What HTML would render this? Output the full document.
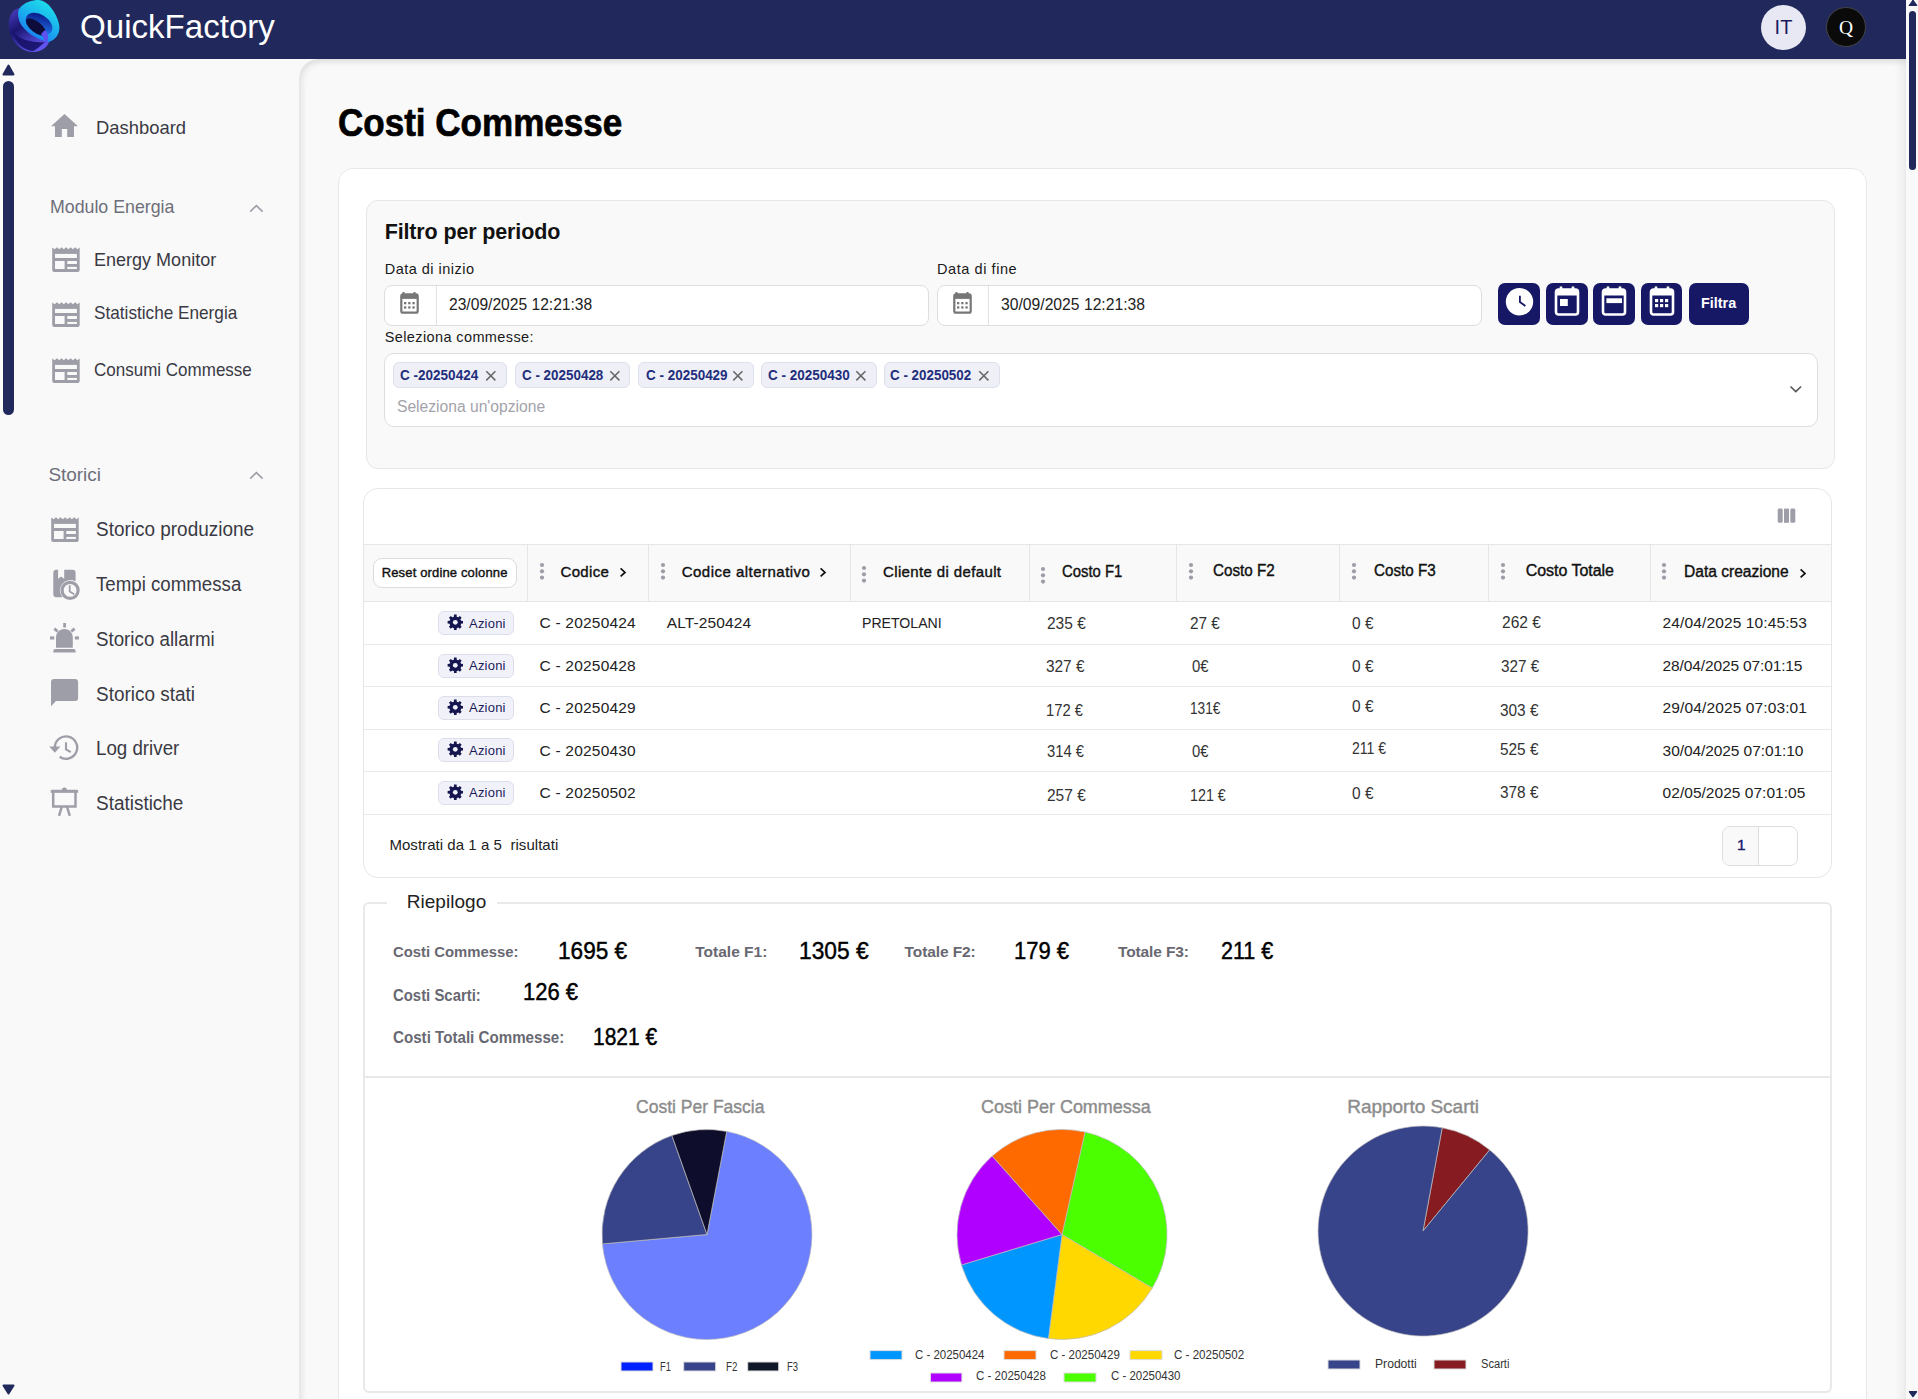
<!DOCTYPE html><html><head><meta charset="utf-8"><style>
*{box-sizing:border-box;margin:0;padding:0}
html,body{width:1918px;height:1399px;overflow:hidden;background:#f9f9f9}
body{position:relative;font-family:"Liberation Sans",sans-serif}
.t{position:absolute;white-space:nowrap}
.b{position:absolute}
</style></head><body>
<div class="b" style="left:0;top:0;width:1906px;height:59px;background:#21295c"></div>
<div class="b" style="left:299px;top:59px;width:1607px;height:1400px;background:#f9f9f9;border-top-left-radius:20px;box-shadow:inset 3px 3px 6px rgba(0,0,0,0.09), inset -5px 0 9px rgba(0,0,0,0.06)"></div>
<div class="b" style="left:1906px;top:0;width:12px;height:1399px;background:#f9f9f9"></div>
<svg class="b" style="left:1906px;top:0" width="12" height="1399"><path d="M3,5.5 L7,0 L11,5.5 Z" fill="#21295c" stroke="#21295c" stroke-width="1" stroke-linejoin="round"/><rect x="3" y="11" width="7" height="159" rx="3.5" fill="#21295c"/><path d="M3.5,1391.8 L10.5,1391.8 L7,1396.6 Z" fill="#21295c" stroke="#21295c" stroke-width="1.4" stroke-linejoin="round"/></svg>
<svg class="b" style="left:0;top:59px" width="20" height="1340"><path d="M3.5,15.5 L8.5,6.5 L13.5,15.5 Z" fill="#21295c" stroke="#21295c" stroke-width="2" stroke-linejoin="round"/><rect x="3" y="22" width="11" height="334" rx="5.5" fill="#21295c"/><path d="M3.5,1326.5 L13.5,1326.5 L8.5,1334.5 Z" fill="#21295c" stroke="#21295c" stroke-width="2" stroke-linejoin="round"/></svg>
<div class="b" style="left:338px;top:168px;width:1529px;height:1300px;background:#fff;border:1px solid #e8e8e8;border-radius:15px"></div>
<div class="b" style="left:366px;top:200px;width:1469px;height:269px;background:#f9f9f9;border:1px solid #e6e6e6;border-radius:12px"></div>
<div class="b" style="left:363px;top:488px;width:1469px;height:390px;background:#fff;border:1px solid #e6e6e6;border-radius:15px;overflow:hidden"><div class="b" style="left:0;top:55px;width:1469px;height:58px;background:#f9f9f9;border-top:1px solid #e6e6e6;border-bottom:1px solid #e6e6e6"></div><div class="b" style="left:0;top:155px;width:1469px;height:1px;background:#e9e9e9"></div><div class="b" style="left:0;top:197px;width:1469px;height:1px;background:#e9e9e9"></div><div class="b" style="left:0;top:240px;width:1469px;height:1px;background:#e9e9e9"></div><div class="b" style="left:0;top:282px;width:1469px;height:1px;background:#e9e9e9"></div><div class="b" style="left:0;top:325px;width:1469px;height:1px;background:#e9e9e9"></div><div class="b" style="left:163px;top:56px;width:1px;height:56px;background:#e6e6e6"></div><div class="b" style="left:284px;top:56px;width:1px;height:56px;background:#e6e6e6"></div><div class="b" style="left:486px;top:56px;width:1px;height:56px;background:#e6e6e6"></div><div class="b" style="left:665px;top:56px;width:1px;height:56px;background:#e6e6e6"></div><div class="b" style="left:812px;top:56px;width:1px;height:56px;background:#e6e6e6"></div><div class="b" style="left:975px;top:56px;width:1px;height:56px;background:#e6e6e6"></div><div class="b" style="left:1124px;top:56px;width:1px;height:56px;background:#e6e6e6"></div><div class="b" style="left:1286px;top:56px;width:1px;height:56px;background:#e6e6e6"></div></div>
<div class="b" style="left:363px;top:902px;width:1469px;height:491px;border:2px solid #e9e9e9;border-radius:6px"></div>
<div class="b" style="left:387px;top:895px;width:110px;height:12px;background:#fff"></div>
<div class="b" style="left:365px;top:1076px;width:1466px;height:2px;background:#e9e9e9"></div>
<svg class="b" style="left:0;top:0" width="70" height="59" viewBox="0 0 70 59">
<defs>
<linearGradient id="lgP" x1="0" y1="0" x2="0.6" y2="1"><stop offset="0" stop-color="#5040c8"/><stop offset="0.45" stop-color="#1a1670"/><stop offset="1" stop-color="#6254ee"/></linearGradient>
<linearGradient id="lgC" x1="0.8" y1="0" x2="0.2" y2="1"><stop offset="0" stop-color="#1ee6ea"/><stop offset="0.55" stop-color="#1aa8ee"/><stop offset="1" stop-color="#1a6ef2"/></linearGradient>
<linearGradient id="lgB" x1="0.2" y1="0" x2="0.8" y2="1"><stop offset="0" stop-color="#0a1480"/><stop offset="1" stop-color="#2080f8"/></linearGradient>
</defs>
<path d="M19,8 C12,10 8,16 9,28 C10,40 20,52 33,52 C42,52 48,46 49,42 L40,30 Z" fill="url(#lgP)"/>
<path d="M19,9 C24,2 32,0 39,0 C48,1 56,12 59,24 C61,34 55,40 49,42 C40,40 30,36 22,26 C18,20 17,13 19,9 Z" fill="url(#lgC)"/>
<ellipse cx="39" cy="24" rx="14.5" ry="9.5" transform="rotate(32 39 24)" fill="url(#lgB)"/>
<path d="M13,32 C20,40 32,43 45,42 C40,46 36,50 33,51 C24,50 16,44 13,32 Z" fill="#171268" opacity="0.9"/>
<ellipse cx="36" cy="27" rx="12" ry="5.3" transform="rotate(38 36 27)" fill="#0e0c3a"/>
<path d="M45,30 C49,34 49,40 46,44 C44,40 43,36 41,34 Z" fill="#5e50f0"/>
</svg>
<div class="b" style="left:1761px;top:5px;width:45px;height:45px;border-radius:50%;background:#e8e8f4"></div>
<div class="t" style="left:1761px;top:15px;width:45px;text-align:center;font:400 20px/24px 'Liberation Sans',sans-serif;color:#1a1a5e">IT</div>
<div class="b" style="left:1826px;top:7px;width:40px;height:40px;border-radius:50%;background:#0a0a0a;border:1px solid #444"></div>
<div class="t" style="left:1826px;top:17px;width:40px;text-align:center;font:400 19.5px/22px 'Liberation Serif',serif;color:#fff">Q</div>
<svg class="b" style="left:48px;top:110px;" width="30" height="28" viewBox="0 0 30 28"><path d="M10.8,27 V18.9 H16.2 V27 H23 V16.2 H27 L13.5,4 L0,16.2 H4 V27 Z" transform="translate(3,0) scale(1)" fill="#9e9ea8"/></svg>
<svg class="b" style="left:51.5px;top:247.2px;" width="28" height="25" viewBox="0 0 28 25"><path d="M0.2,23 L0.2,0.6 L2.7,2.2 L5.0,0.2 L7.2,2.2 L9.5,0.2 L11.8,2.2 L14.1,0.2 L16.4,2.2 L18.7,0.2 L20.9,2.2 L23.2,0.2 L25.4,2.2 L27.7,0.6 L27.7,25.0 L27.7,23 Q27.7,25 25.7,25 L2.2,25 Q0.2,25 0.2,23 Z" fill="#9e9ea8"/><rect x="3" y="6.9" width="21.9" height="4.1" fill="#f9f9f9"/><rect x="3" y="14" width="9.6" height="8" fill="#f9f9f9"/><rect x="15.3" y="14" width="9.6" height="3" fill="#f9f9f9"/><rect x="15.3" y="19.9" width="9.6" height="2.1" fill="#f9f9f9"/></svg>
<svg class="b" style="left:51.5px;top:302.3px;" width="28" height="25" viewBox="0 0 28 25"><path d="M0.2,23 L0.2,0.6 L2.7,2.2 L5.0,0.2 L7.2,2.2 L9.5,0.2 L11.8,2.2 L14.1,0.2 L16.4,2.2 L18.7,0.2 L20.9,2.2 L23.2,0.2 L25.4,2.2 L27.7,0.6 L27.7,25.0 L27.7,23 Q27.7,25 25.7,25 L2.2,25 Q0.2,25 0.2,23 Z" fill="#9e9ea8"/><rect x="3" y="6.9" width="21.9" height="4.1" fill="#f9f9f9"/><rect x="3" y="14" width="9.6" height="8" fill="#f9f9f9"/><rect x="15.3" y="14" width="9.6" height="3" fill="#f9f9f9"/><rect x="15.3" y="19.9" width="9.6" height="2.1" fill="#f9f9f9"/></svg>
<svg class="b" style="left:51.5px;top:358.1px;" width="28" height="25" viewBox="0 0 28 25"><path d="M0.2,23 L0.2,0.6 L2.7,2.2 L5.0,0.2 L7.2,2.2 L9.5,0.2 L11.8,2.2 L14.1,0.2 L16.4,2.2 L18.7,0.2 L20.9,2.2 L23.2,0.2 L25.4,2.2 L27.7,0.6 L27.7,25.0 L27.7,23 Q27.7,25 25.7,25 L2.2,25 Q0.2,25 0.2,23 Z" fill="#9e9ea8"/><rect x="3" y="6.9" width="21.9" height="4.1" fill="#f9f9f9"/><rect x="3" y="14" width="9.6" height="8" fill="#f9f9f9"/><rect x="15.3" y="14" width="9.6" height="3" fill="#f9f9f9"/><rect x="15.3" y="19.9" width="9.6" height="2.1" fill="#f9f9f9"/></svg>
<svg class="b" style="left:50.8px;top:516.5px;" width="28" height="25" viewBox="0 0 28 25"><path d="M0.2,23 L0.2,0.6 L2.7,2.2 L5.0,0.2 L7.2,2.2 L9.5,0.2 L11.8,2.2 L14.1,0.2 L16.4,2.2 L18.7,0.2 L20.9,2.2 L23.2,0.2 L25.4,2.2 L27.7,0.6 L27.7,25.0 L27.7,23 Q27.7,25 25.7,25 L2.2,25 Q0.2,25 0.2,23 Z" fill="#9e9ea8"/><rect x="3" y="6.9" width="21.9" height="4.1" fill="#f9f9f9"/><rect x="3" y="14" width="9.6" height="8" fill="#f9f9f9"/><rect x="15.3" y="14" width="9.6" height="3" fill="#f9f9f9"/><rect x="15.3" y="19.9" width="9.6" height="2.1" fill="#f9f9f9"/></svg>
<svg class="b" style="left:50px;top:566px;" width="32" height="36" viewBox="0 0 32 36"><path d="M6.3,3.8 H8.1 V12.8 L11.15,10.6 L14.2,12.8 V3.8 H22.6 Q25.6,3.8 25.6,6.8 V15.5 A10.4,10.4 0 0 0 12.5,31.3 H6.3 Q3.3,31.3 3.3,28.3 V6.8 Q3.3,3.8 6.3,3.8 Z" fill="#9e9ea8"/><circle cx="20.1" cy="24.4" r="8" fill="none" stroke="#9e9ea8" stroke-width="3.2"/><path d="M19.7,19.3 V25.5 L24.2,28.2" fill="none" stroke="#9e9ea8" stroke-width="1.8"/></svg>
<svg class="b" style="left:48px;top:620px;" width="34" height="36" viewBox="0 0 34 36"><path d="M8,27.7 V17.3 A8.4,8.4 0 0 1 24.8,17.3 V27.7 Z" fill="#9e9ea8"/><path d="M5.3,32.5 V31 Q5.3,29.1 7.3,29.1 H25.6 Q27.6,29.1 27.6,31 V32.5 Z" fill="#9e9ea8"/><rect x="15.2" y="3" width="2.8" height="4.5" fill="#9e9ea8"/><path d="M6.3,8.6 L9.6,11.5" stroke="#9e9ea8" stroke-width="2.8"/><path d="M26.6,8.6 L23.3,11.5" stroke="#9e9ea8" stroke-width="2.8"/><rect x="2" y="16.4" width="4.3" height="3.1" fill="#9e9ea8"/><rect x="26.9" y="16.4" width="4.1" height="3.1" fill="#9e9ea8"/></svg>
<svg class="b" style="left:50px;top:677px;" width="30" height="32" viewBox="0 0 30 32"><path d="M4,2 H25.1 Q28.1,2 28.1,5 V21 Q28.1,24 25.1,24 H6 L1,29.2 V5 Q1,2 4,2 Z" fill="#9e9ea8"/></svg>
<svg class="b" style="left:48px;top:732px;" width="34" height="32" viewBox="0 0 34 32"><path d="M6.8,15.6 A11.2,11.2 0 1 1 11.6,24.8" fill="none" stroke="#9e9ea8" stroke-width="2.3"/><path d="M1.2,14.6 L12.4,14.6 L6.8,20.8 Z" fill="#9e9ea8"/><path d="M18,10.3 V17.3 L22.8,20.2" fill="none" stroke="#9e9ea8" stroke-width="2.1"/></svg>
<svg class="b" style="left:48px;top:784px;" width="34" height="34" viewBox="0 0 34 34"><rect x="2.7" y="6" width="27.4" height="2.8" fill="#9e9ea8"/><path d="M13.9,6 A2.5,2.5 0 0 1 18.9,6 Z" fill="#9e9ea8"/><rect x="5.2" y="7" width="22.3" height="15.5" fill="none" stroke="#9e9ea8" stroke-width="2.5"/><path d="M13.7,23 L11,31.8 M19.1,23 L21.8,31.8" stroke="#9e9ea8" stroke-width="2.5"/></svg>
<svg class="b" style="left:248px;top:204px;" width="17" height="10" viewBox="0 0 17 10"><path d="M2.2,7.6 L8.4,1.6 L14.6,7.6" fill="none" stroke="#9e9ea8" stroke-width="1.6"/></svg>
<svg class="b" style="left:248px;top:471px;" width="17" height="10" viewBox="0 0 17 10"><path d="M2.2,7.6 L8.4,1.6 L14.6,7.6" fill="none" stroke="#9e9ea8" stroke-width="1.6"/></svg>
<div class="b" style="left:383.5px;top:285px;width:545.0px;height:41px;background:#fff;border:1px solid #dedede;border-radius:8px"></div>
<div class="b" style="left:435.5px;top:286px;width:1px;height:39px;background:#e2e2e2"></div>
<svg class="b" style="left:399.0px;top:291px;" width="21" height="24" viewBox="0 0 21 24"><path d="M4.5,1 V4 M15.5,1 V4" stroke="#777" stroke-width="2"/><rect x="2.3" y="3.3" width="16.4" height="18.4" rx="1.8" fill="none" stroke="#777" stroke-width="2.2"/><rect x="2.3" y="3.3" width="16.4" height="4.6" fill="#777"/><rect x="5.0" y="11.0" width="2.3" height="2.3" fill="#777"/><rect x="5.0" y="15.3" width="2.3" height="2.3" fill="#777"/><rect x="9.2" y="11.0" width="2.3" height="2.3" fill="#777"/><rect x="9.2" y="15.3" width="2.3" height="2.3" fill="#777"/><rect x="13.4" y="11.0" width="2.3" height="2.3" fill="#777"/><rect x="13.4" y="15.3" width="2.3" height="2.3" fill="#777"/></svg>
<div class="b" style="left:936.5px;top:285px;width:545.0px;height:41px;background:#fff;border:1px solid #dedede;border-radius:8px"></div>
<div class="b" style="left:987.5px;top:286px;width:1px;height:39px;background:#e2e2e2"></div>
<svg class="b" style="left:951.5px;top:291px;" width="21" height="24" viewBox="0 0 21 24"><path d="M4.5,1 V4 M15.5,1 V4" stroke="#777" stroke-width="2"/><rect x="2.3" y="3.3" width="16.4" height="18.4" rx="1.8" fill="none" stroke="#777" stroke-width="2.2"/><rect x="2.3" y="3.3" width="16.4" height="4.6" fill="#777"/><rect x="5.0" y="11.0" width="2.3" height="2.3" fill="#777"/><rect x="5.0" y="15.3" width="2.3" height="2.3" fill="#777"/><rect x="9.2" y="11.0" width="2.3" height="2.3" fill="#777"/><rect x="9.2" y="15.3" width="2.3" height="2.3" fill="#777"/><rect x="13.4" y="11.0" width="2.3" height="2.3" fill="#777"/><rect x="13.4" y="15.3" width="2.3" height="2.3" fill="#777"/></svg>
<div class="b" style="left:1498.3px;top:283px;width:41.6px;height:42px;background:#161866;border-radius:7px"></div>
<div class="b" style="left:1546px;top:283px;width:42.0px;height:42px;background:#161866;border-radius:7px"></div>
<div class="b" style="left:1593px;top:283px;width:41.6px;height:42px;background:#161866;border-radius:7px"></div>
<div class="b" style="left:1640.8px;top:283px;width:41.5px;height:42px;background:#161866;border-radius:7px"></div>
<div class="b" style="left:1688.6px;top:283px;width:60.6px;height:42px;background:#161866;border-radius:7px"></div>
<svg class="b" style="left:1505px;top:287px;" width="30" height="30" viewBox="0 0 30 30"><circle cx="14.5" cy="14.7" r="13.7" fill="#fff"/><path d="M14.9,8.8 V15 L20.4,19" fill="none" stroke="#161866" stroke-width="1.8"/></svg>
<svg class="b" style="left:1553.3px;top:285px;" width="28" height="32" viewBox="0 0 28 32"><path d="M8,1.5 V6 M20,1.5 V6" stroke="#fff" stroke-width="2.6"/><rect x="3" y="4.5" width="22" height="25" rx="2.5" fill="none" stroke="#fff" stroke-width="2.6"/><rect x="3" y="4.5" width="22" height="6" fill="#fff"/><rect x="7" y="14" width="7.8" height="7" fill="#fff"/></svg>
<svg class="b" style="left:1600.3px;top:285px;" width="28" height="32" viewBox="0 0 28 32"><path d="M8,1.5 V6 M20,1.5 V6" stroke="#fff" stroke-width="2.6"/><rect x="3" y="4.5" width="22" height="25" rx="2.5" fill="none" stroke="#fff" stroke-width="2.6"/><rect x="3" y="4.5" width="22" height="6" fill="#fff"/><rect x="6.4" y="13.3" width="15.6" height="4.8" fill="#fff"/></svg>
<svg class="b" style="left:1647.8px;top:285px;" width="28" height="32" viewBox="0 0 28 32"><path d="M8,1.5 V6 M20,1.5 V6" stroke="#fff" stroke-width="2.6"/><rect x="3" y="4.5" width="22" height="25" rx="2.5" fill="none" stroke="#fff" stroke-width="2.6"/><rect x="3" y="4.5" width="22" height="6" fill="#fff"/><rect x="7.0" y="14.0" width="3.2" height="3.2" fill="#fff"/><rect x="7.0" y="19.0" width="3.2" height="3.2" fill="#fff"/><rect x="12.0" y="14.0" width="3.2" height="3.2" fill="#fff"/><rect x="12.0" y="19.0" width="3.2" height="3.2" fill="#fff"/><rect x="17.0" y="14.0" width="3.2" height="3.2" fill="#fff"/><rect x="17.0" y="19.0" width="3.2" height="3.2" fill="#fff"/></svg>
<div class="t" style="left:1701.0px;top:294.9px;font:700 15.5px/15.5px 'Liberation Sans', sans-serif;color:#fff;letter-spacing:0.00px;transform:scaleX(0.9288);transform-origin:0 0;">Filtra</div>
<div class="b" style="left:383.5px;top:353px;width:1434px;height:74px;background:#fff;border:1px solid #dedede;border-radius:10px"></div>
<svg class="b" style="left:1788px;top:383px;" width="16" height="12" viewBox="0 0 16 12"><path d="M2.5,3.5 L7.8,8.6 L13.1,3.5" fill="none" stroke="#555" stroke-width="1.5"/></svg>
<div class="b" style="left:393px;top:362.3px;width:114.4px;height:25.5px;background:#eff0f7;border:1px solid #dcdfec;border-radius:6px"></div>
<div class="t" style="left:400.0px;top:368.1px;font:700 14.0px/14.0px 'Liberation Sans', sans-serif;color:#1f2e7c;letter-spacing:0.00px;transform:scaleX(0.9661);transform-origin:0 0;">C -20250424</div>
<svg class="b" style="left:485px;top:370px;" width="12" height="12" viewBox="0 0 12 12"><path d="M1.3,1.3 L10.4,10.4 M10.4,1.3 L1.3,10.4" stroke="#666" stroke-width="1.5"/></svg>
<div class="b" style="left:514.8px;top:362.3px;width:115.5px;height:25.5px;background:#eff0f7;border:1px solid #dcdfec;border-radius:6px"></div>
<div class="t" style="left:522.3px;top:368.1px;font:700 14.0px/14.0px 'Liberation Sans', sans-serif;color:#1f2e7c;letter-spacing:0.00px;transform:scaleX(0.9583);transform-origin:0 0;">C - 20250428</div>
<svg class="b" style="left:608.7px;top:370px;" width="12" height="12" viewBox="0 0 12 12"><path d="M1.3,1.3 L10.4,10.4 M10.4,1.3 L1.3,10.4" stroke="#666" stroke-width="1.5"/></svg>
<div class="b" style="left:638.3px;top:362.3px;width:115.9px;height:25.5px;background:#eff0f7;border:1px solid #dcdfec;border-radius:6px"></div>
<div class="t" style="left:645.5px;top:368.1px;font:700 14.0px/14.0px 'Liberation Sans', sans-serif;color:#1f2e7c;letter-spacing:0.00px;transform:scaleX(0.9618);transform-origin:0 0;">C - 20250429</div>
<svg class="b" style="left:732px;top:370px;" width="12" height="12" viewBox="0 0 12 12"><path d="M1.3,1.3 L10.4,10.4 M10.4,1.3 L1.3,10.4" stroke="#666" stroke-width="1.5"/></svg>
<div class="b" style="left:761.2px;top:362.3px;width:115.5px;height:25.5px;background:#eff0f7;border:1px solid #dcdfec;border-radius:6px"></div>
<div class="t" style="left:768.3px;top:368.1px;font:700 14.0px/14.0px 'Liberation Sans', sans-serif;color:#1f2e7c;letter-spacing:0.00px;transform:scaleX(0.9630);transform-origin:0 0;">C - 20250430</div>
<svg class="b" style="left:854.9px;top:370px;" width="12" height="12" viewBox="0 0 12 12"><path d="M1.3,1.3 L10.4,10.4 M10.4,1.3 L1.3,10.4" stroke="#666" stroke-width="1.5"/></svg>
<div class="b" style="left:884.2px;top:362.3px;width:115.9px;height:25.5px;background:#eff0f7;border:1px solid #dcdfec;border-radius:6px"></div>
<div class="t" style="left:889.6px;top:368.1px;font:700 14.0px/14.0px 'Liberation Sans', sans-serif;color:#1f2e7c;letter-spacing:0.00px;transform:scaleX(0.9571);transform-origin:0 0;">C - 20250502</div>
<svg class="b" style="left:978.1px;top:370px;" width="12" height="12" viewBox="0 0 12 12"><path d="M1.3,1.3 L10.4,10.4 M10.4,1.3 L1.3,10.4" stroke="#666" stroke-width="1.5"/></svg>
<div class="b" style="left:372.5px;top:557.5px;width:144.5px;height:30px;background:#fff;border:1px solid #dcdcdc;border-radius:9px"></div>
<svg class="b" style="left:538.5px;top:561.8px;" width="6" height="18" viewBox="0 0 6 18"><circle cx="3" cy="3.0" r="2.1" fill="#9d9da8"/><circle cx="3" cy="9.3" r="2.1" fill="#9d9da8"/><circle cx="3" cy="15.6" r="2.1" fill="#9d9da8"/></svg>
<svg class="b" style="left:660px;top:562px;" width="6" height="18" viewBox="0 0 6 18"><circle cx="3" cy="3.0" r="2.1" fill="#9d9da8"/><circle cx="3" cy="9.3" r="2.1" fill="#9d9da8"/><circle cx="3" cy="15.6" r="2.1" fill="#9d9da8"/></svg>
<svg class="b" style="left:860.8px;top:565px;" width="6" height="18" viewBox="0 0 6 18"><circle cx="3" cy="3.0" r="2.1" fill="#9d9da8"/><circle cx="3" cy="9.3" r="2.1" fill="#9d9da8"/><circle cx="3" cy="15.6" r="2.1" fill="#9d9da8"/></svg>
<svg class="b" style="left:1039.5px;top:565.8px;" width="6" height="18" viewBox="0 0 6 18"><circle cx="3" cy="3.0" r="2.1" fill="#9d9da8"/><circle cx="3" cy="9.3" r="2.1" fill="#9d9da8"/><circle cx="3" cy="15.6" r="2.1" fill="#9d9da8"/></svg>
<svg class="b" style="left:1187.8px;top:561.5px;" width="6" height="18" viewBox="0 0 6 18"><circle cx="3" cy="3.0" r="2.1" fill="#9d9da8"/><circle cx="3" cy="9.3" r="2.1" fill="#9d9da8"/><circle cx="3" cy="15.6" r="2.1" fill="#9d9da8"/></svg>
<svg class="b" style="left:1350.5px;top:561.5px;" width="6" height="18" viewBox="0 0 6 18"><circle cx="3" cy="3.0" r="2.1" fill="#9d9da8"/><circle cx="3" cy="9.3" r="2.1" fill="#9d9da8"/><circle cx="3" cy="15.6" r="2.1" fill="#9d9da8"/></svg>
<svg class="b" style="left:1499.7px;top:561.6px;" width="6" height="18" viewBox="0 0 6 18"><circle cx="3" cy="3.0" r="2.1" fill="#9d9da8"/><circle cx="3" cy="9.3" r="2.1" fill="#9d9da8"/><circle cx="3" cy="15.6" r="2.1" fill="#9d9da8"/></svg>
<svg class="b" style="left:1661.3px;top:561.6px;" width="6" height="18" viewBox="0 0 6 18"><circle cx="3" cy="3.0" r="2.1" fill="#9d9da8"/><circle cx="3" cy="9.3" r="2.1" fill="#9d9da8"/><circle cx="3" cy="15.6" r="2.1" fill="#9d9da8"/></svg>
<svg class="b" style="left:619.3px;top:566.9px;" width="9" height="11" viewBox="0 0 9 11"><path d="M1.6,1.4 L6,5.4 L1.6,9.4" fill="none" stroke="#111" stroke-width="1.7"/></svg>
<svg class="b" style="left:819px;top:566.9px;" width="9" height="11" viewBox="0 0 9 11"><path d="M1.6,1.4 L6,5.4 L1.6,9.4" fill="none" stroke="#111" stroke-width="1.7"/></svg>
<svg class="b" style="left:1799px;top:567.5px;" width="9" height="11" viewBox="0 0 9 11"><path d="M1.6,1.4 L6,5.4 L1.6,9.4" fill="none" stroke="#111" stroke-width="1.7"/></svg>
<svg class="b" style="left:1777px;top:508px;" width="20" height="16" viewBox="0 0 20 16"><rect x="0.7" y="0.6" width="5" height="14.2" rx="1.6" fill="#9e9ea8"/><rect x="7" y="0.6" width="5" height="14.2" fill="#9e9ea8"/><rect x="13.3" y="0.6" width="5" height="14.2" rx="1.6" fill="#9e9ea8"/></svg>
<div class="b" style="left:437.5px;top:611px;width:76.2px;height:24.4px;background:#f1f2f9;border:1px solid #dcdeea;border-radius:6px"></div>
<svg class="b" style="left:446.5px;top:614px;" width="17" height="17" viewBox="0 0 17 17"><path d="M13.71,6.86 L15.99,6.98 L15.99,9.62 L13.71,9.74 L13.14,11.11 L14.67,12.80 L12.80,14.67 L11.11,13.14 L9.74,13.71 L9.62,15.99 L6.98,15.99 L6.86,13.71 L5.49,13.14 L3.80,14.67 L1.93,12.80 L3.46,11.11 L2.89,9.74 L0.61,9.62 L0.61,6.98 L2.89,6.86 L3.46,5.49 L1.93,3.80 L3.80,1.93 L5.49,3.46 L6.86,2.89 L6.98,0.61 L9.62,0.61 L9.74,2.89 L11.11,3.46 L12.80,1.93 L14.67,3.80 L13.14,5.49 Z" fill="#15154f"/><circle cx="8.3" cy="8.3" r="5.9" fill="#15154f"/><circle cx="8.3" cy="8.3" r="2.4" fill="#f1f2f9"/></svg>
<div class="b" style="left:437.5px;top:653.5px;width:76.2px;height:24.0px;background:#f1f2f9;border:1px solid #dcdeea;border-radius:6px"></div>
<svg class="b" style="left:446.5px;top:656.5px;" width="17" height="17" viewBox="0 0 17 17"><path d="M13.71,6.86 L15.99,6.98 L15.99,9.62 L13.71,9.74 L13.14,11.11 L14.67,12.80 L12.80,14.67 L11.11,13.14 L9.74,13.71 L9.62,15.99 L6.98,15.99 L6.86,13.71 L5.49,13.14 L3.80,14.67 L1.93,12.80 L3.46,11.11 L2.89,9.74 L0.61,9.62 L0.61,6.98 L2.89,6.86 L3.46,5.49 L1.93,3.80 L3.80,1.93 L5.49,3.46 L6.86,2.89 L6.98,0.61 L9.62,0.61 L9.74,2.89 L11.11,3.46 L12.80,1.93 L14.67,3.80 L13.14,5.49 Z" fill="#15154f"/><circle cx="8.3" cy="8.3" r="5.9" fill="#15154f"/><circle cx="8.3" cy="8.3" r="2.4" fill="#f1f2f9"/></svg>
<div class="b" style="left:437.5px;top:696px;width:76.2px;height:24.3px;background:#f1f2f9;border:1px solid #dcdeea;border-radius:6px"></div>
<svg class="b" style="left:446.5px;top:699px;" width="17" height="17" viewBox="0 0 17 17"><path d="M13.71,6.86 L15.99,6.98 L15.99,9.62 L13.71,9.74 L13.14,11.11 L14.67,12.80 L12.80,14.67 L11.11,13.14 L9.74,13.71 L9.62,15.99 L6.98,15.99 L6.86,13.71 L5.49,13.14 L3.80,14.67 L1.93,12.80 L3.46,11.11 L2.89,9.74 L0.61,9.62 L0.61,6.98 L2.89,6.86 L3.46,5.49 L1.93,3.80 L3.80,1.93 L5.49,3.46 L6.86,2.89 L6.98,0.61 L9.62,0.61 L9.74,2.89 L11.11,3.46 L12.80,1.93 L14.67,3.80 L13.14,5.49 Z" fill="#15154f"/><circle cx="8.3" cy="8.3" r="5.9" fill="#15154f"/><circle cx="8.3" cy="8.3" r="2.4" fill="#f1f2f9"/></svg>
<div class="b" style="left:437.5px;top:738.4px;width:76.2px;height:24.0px;background:#f1f2f9;border:1px solid #dcdeea;border-radius:6px"></div>
<svg class="b" style="left:446.5px;top:741.4px;" width="17" height="17" viewBox="0 0 17 17"><path d="M13.71,6.86 L15.99,6.98 L15.99,9.62 L13.71,9.74 L13.14,11.11 L14.67,12.80 L12.80,14.67 L11.11,13.14 L9.74,13.71 L9.62,15.99 L6.98,15.99 L6.86,13.71 L5.49,13.14 L3.80,14.67 L1.93,12.80 L3.46,11.11 L2.89,9.74 L0.61,9.62 L0.61,6.98 L2.89,6.86 L3.46,5.49 L1.93,3.80 L3.80,1.93 L5.49,3.46 L6.86,2.89 L6.98,0.61 L9.62,0.61 L9.74,2.89 L11.11,3.46 L12.80,1.93 L14.67,3.80 L13.14,5.49 Z" fill="#15154f"/><circle cx="8.3" cy="8.3" r="5.9" fill="#15154f"/><circle cx="8.3" cy="8.3" r="2.4" fill="#f1f2f9"/></svg>
<div class="b" style="left:437.5px;top:780.8px;width:76.2px;height:24.4px;background:#f1f2f9;border:1px solid #dcdeea;border-radius:6px"></div>
<svg class="b" style="left:446.5px;top:783.8px;" width="17" height="17" viewBox="0 0 17 17"><path d="M13.71,6.86 L15.99,6.98 L15.99,9.62 L13.71,9.74 L13.14,11.11 L14.67,12.80 L12.80,14.67 L11.11,13.14 L9.74,13.71 L9.62,15.99 L6.98,15.99 L6.86,13.71 L5.49,13.14 L3.80,14.67 L1.93,12.80 L3.46,11.11 L2.89,9.74 L0.61,9.62 L0.61,6.98 L2.89,6.86 L3.46,5.49 L1.93,3.80 L3.80,1.93 L5.49,3.46 L6.86,2.89 L6.98,0.61 L9.62,0.61 L9.74,2.89 L11.11,3.46 L12.80,1.93 L14.67,3.80 L13.14,5.49 Z" fill="#15154f"/><circle cx="8.3" cy="8.3" r="5.9" fill="#15154f"/><circle cx="8.3" cy="8.3" r="2.4" fill="#f1f2f9"/></svg>
<div class="b" style="left:1722.4px;top:826px;width:75.6px;height:40px;background:#fff;border:1px solid #dedede;border-radius:8px;overflow:hidden"><div class="b" style="left:0;top:0;width:36px;height:39px;background:#f9f9f9;border-right:1.5px solid #dedede"></div></div>
<div class="t" style="left:79.6px;top:9.6px;font:400 33.5px/33.5px 'Liberation Sans', sans-serif;color:#ffffff;letter-spacing:0.00px;transform:scaleX(0.9878);transform-origin:0 0;">QuickFactory</div>
<div class="t" style="left:96.0px;top:117.9px;font:400 19.0px/19.0px 'Liberation Sans', sans-serif;color:#3a3a44;letter-spacing:0.00px;transform:scaleX(0.9683);transform-origin:0 0;">Dashboard</div>
<div class="t" style="left:50.0px;top:198.3px;font:400 18.5px/18.5px 'Liberation Sans', sans-serif;color:#6e6e7a;letter-spacing:0.00px;transform:scaleX(0.9599);transform-origin:0 0;">Modulo Energia</div>
<div class="t" style="left:94.3px;top:250.2px;font:400 19.0px/19.0px 'Liberation Sans', sans-serif;color:#3a3a44;letter-spacing:0.00px;transform:scaleX(0.9485);transform-origin:0 0;">Energy Monitor</div>
<div class="t" style="left:94.3px;top:303.0px;font:400 19.0px/19.0px 'Liberation Sans', sans-serif;color:#3a3a44;letter-spacing:0.00px;transform:scaleX(0.9044);transform-origin:0 0;">Statistiche Energia</div>
<div class="t" style="left:94.3px;top:361.3px;font:400 18.5px/18.5px 'Liberation Sans', sans-serif;color:#3a3a44;letter-spacing:0.00px;transform:scaleX(0.9192);transform-origin:0 0;">Consumi Commesse</div>
<div class="t" style="left:48.4px;top:465.1px;font:400 19.0px/19.0px 'Liberation Sans', sans-serif;color:#6e6e7a;letter-spacing:-0.03px;">Storici</div>
<div class="t" style="left:96.0px;top:520.1px;font:400 19.5px/19.5px 'Liberation Sans', sans-serif;color:#3a3a44;letter-spacing:0.00px;transform:scaleX(0.9718);transform-origin:0 0;">Storico produzione</div>
<div class="t" style="left:96.0px;top:574.5px;font:400 19.5px/19.5px 'Liberation Sans', sans-serif;color:#3a3a44;letter-spacing:0.00px;transform:scaleX(0.9576);transform-origin:0 0;">Tempi commessa</div>
<div class="t" style="left:96.0px;top:629.5px;font:400 19.5px/19.5px 'Liberation Sans', sans-serif;color:#3a3a44;letter-spacing:0.00px;transform:scaleX(0.9609);transform-origin:0 0;">Storico allarmi</div>
<div class="t" style="left:96.0px;top:684.5px;font:400 19.5px/19.5px 'Liberation Sans', sans-serif;color:#3a3a44;letter-spacing:0.00px;transform:scaleX(0.9718);transform-origin:0 0;">Storico stati</div>
<div class="t" style="left:96.0px;top:738.9px;font:400 19.5px/19.5px 'Liberation Sans', sans-serif;color:#3a3a44;letter-spacing:0.00px;transform:scaleX(0.9606);transform-origin:0 0;">Log driver</div>
<div class="t" style="left:96.0px;top:793.5px;font:400 19.5px/19.5px 'Liberation Sans', sans-serif;color:#3a3a44;letter-spacing:0.00px;transform:scaleX(0.9716);transform-origin:0 0;">Statistiche</div>
<div class="t" style="left:337.8px;top:104.0px;font:700 38.5px/38.5px 'Liberation Sans', sans-serif;color:#000;letter-spacing:0.00px;transform:scaleX(0.9098);transform-origin:0 0;-webkit-text-stroke:0.7px #000;">Costi Commesse</div>
<div class="t" style="left:384.7px;top:222.2px;font:700 21.5px/21.5px 'Liberation Sans', sans-serif;color:#111;letter-spacing:-0.14px;">Filtro per periodo</div>
<div class="t" style="left:384.7px;top:261.7px;font:400 14.5px/14.5px 'Liberation Sans', sans-serif;color:#1a1a1a;letter-spacing:0.49px;">Data di inizio</div>
<div class="t" style="left:937.0px;top:261.7px;font:400 14.5px/14.5px 'Liberation Sans', sans-serif;color:#1a1a1a;letter-spacing:0.57px;">Data di fine</div>
<div class="t" style="left:448.8px;top:296.5px;font:400 16.0px/16.0px 'Liberation Sans', sans-serif;color:#222;letter-spacing:0.00px;transform:scaleX(0.9755);transform-origin:0 0;">23/09/2025 12:21:38</div>
<div class="t" style="left:1001.0px;top:296.5px;font:400 16.0px/16.0px 'Liberation Sans', sans-serif;color:#222;letter-spacing:0.00px;transform:scaleX(0.9809);transform-origin:0 0;">30/09/2025 12:21:38</div>
<div class="t" style="left:384.7px;top:330.2px;font:400 14.5px/14.5px 'Liberation Sans', sans-serif;color:#1a1a1a;letter-spacing:0.39px;">Seleziona commesse:</div>
<div class="t" style="left:397.2px;top:398.5px;font:400 16.0px/16.0px 'Liberation Sans', sans-serif;color:#a3a3ab;letter-spacing:0.00px;transform:scaleX(0.9768);transform-origin:0 0;">Seleziona un'opzione</div>
<div class="t" style="left:381.7px;top:566.0px;font:400 13.0px/13.0px 'Liberation Sans', sans-serif;color:#111;letter-spacing:0.15px;-webkit-text-stroke:0.4px #111;">Reset ordine colonne</div>
<div class="t" style="left:560.5px;top:563.6px;font:400 15.0px/15.0px 'Liberation Sans', sans-serif;color:#111;letter-spacing:0.32px;-webkit-text-stroke:0.4px #111;">Codice</div>
<div class="t" style="left:681.7px;top:563.6px;font:400 15.0px/15.0px 'Liberation Sans', sans-serif;color:#111;letter-spacing:0.48px;-webkit-text-stroke:0.4px #111;">Codice alternativo</div>
<div class="t" style="left:883.0px;top:563.6px;font:400 15.0px/15.0px 'Liberation Sans', sans-serif;color:#111;letter-spacing:0.37px;-webkit-text-stroke:0.4px #111;">Cliente di default</div>
<div class="t" style="left:1062.3px;top:563.0px;font:400 16.5px/16.5px 'Liberation Sans', sans-serif;color:#111;letter-spacing:0.00px;transform:scaleX(0.8993);transform-origin:0 0;-webkit-text-stroke:0.4px #111;">Costo F1</div>
<div class="t" style="left:1213.3px;top:563.0px;font:400 16.0px/16.0px 'Liberation Sans', sans-serif;color:#111;letter-spacing:0.00px;transform:scaleX(0.9505);transform-origin:0 0;-webkit-text-stroke:0.4px #111;">Costo F2</div>
<div class="t" style="left:1374.3px;top:563.0px;font:400 16.0px/16.0px 'Liberation Sans', sans-serif;color:#111;letter-spacing:0.00px;transform:scaleX(0.9505);transform-origin:0 0;-webkit-text-stroke:0.4px #111;">Costo F3</div>
<div class="t" style="left:1525.7px;top:563.0px;font:400 16.0px/16.0px 'Liberation Sans', sans-serif;color:#111;letter-spacing:-0.03px;-webkit-text-stroke:0.4px #111;">Costo Totale</div>
<div class="t" style="left:1683.6px;top:563.5px;font:400 16.0px/16.0px 'Liberation Sans', sans-serif;color:#111;letter-spacing:0.00px;transform:scaleX(0.9720);transform-origin:0 0;-webkit-text-stroke:0.4px #111;">Data creazione</div>
<div class="t" style="left:469.0px;top:616.5px;font:400 13.0px/13.0px 'Liberation Sans', sans-serif;color:#1b1b5a;letter-spacing:0.22px;">Azioni</div>
<div class="t" style="left:539.6px;top:615.2px;font:400 15.5px/15.5px 'Liberation Sans', sans-serif;color:#222;letter-spacing:0.20px;">C - 20250424</div>
<div class="t" style="left:1662.6px;top:615.2px;font:400 15.5px/15.5px 'Liberation Sans', sans-serif;color:#222;letter-spacing:0.12px;">24/04/2025 10:45:53</div>
<div class="t" style="left:469.0px;top:658.9px;font:400 13.0px/13.0px 'Liberation Sans', sans-serif;color:#1b1b5a;letter-spacing:0.22px;">Azioni</div>
<div class="t" style="left:539.6px;top:657.6px;font:400 15.5px/15.5px 'Liberation Sans', sans-serif;color:#222;letter-spacing:0.20px;">C - 20250428</div>
<div class="t" style="left:1662.6px;top:657.6px;font:400 15.5px/15.5px 'Liberation Sans', sans-serif;color:#222;letter-spacing:-0.13px;">28/04/2025 07:01:15</div>
<div class="t" style="left:469.0px;top:701.1px;font:400 13.0px/13.0px 'Liberation Sans', sans-serif;color:#1b1b5a;letter-spacing:0.22px;">Azioni</div>
<div class="t" style="left:539.6px;top:699.8px;font:400 15.5px/15.5px 'Liberation Sans', sans-serif;color:#222;letter-spacing:0.20px;">C - 20250429</div>
<div class="t" style="left:1662.6px;top:699.8px;font:400 15.5px/15.5px 'Liberation Sans', sans-serif;color:#222;letter-spacing:0.12px;">29/04/2025 07:03:01</div>
<div class="t" style="left:469.0px;top:743.9px;font:400 13.0px/13.0px 'Liberation Sans', sans-serif;color:#1b1b5a;letter-spacing:0.22px;">Azioni</div>
<div class="t" style="left:539.6px;top:742.6px;font:400 15.5px/15.5px 'Liberation Sans', sans-serif;color:#222;letter-spacing:0.20px;">C - 20250430</div>
<div class="t" style="left:1662.6px;top:742.6px;font:400 15.5px/15.5px 'Liberation Sans', sans-serif;color:#222;letter-spacing:-0.08px;">30/04/2025 07:01:10</div>
<div class="t" style="left:469.0px;top:786.0px;font:400 13.0px/13.0px 'Liberation Sans', sans-serif;color:#1b1b5a;letter-spacing:0.22px;">Azioni</div>
<div class="t" style="left:539.6px;top:784.7px;font:400 15.5px/15.5px 'Liberation Sans', sans-serif;color:#222;letter-spacing:0.20px;">C - 20250502</div>
<div class="t" style="left:1662.6px;top:784.7px;font:400 15.5px/15.5px 'Liberation Sans', sans-serif;color:#222;letter-spacing:0.03px;">02/05/2025 07:01:05</div>
<div class="t" style="left:666.7px;top:615.2px;font:400 15.5px/15.5px 'Liberation Sans', sans-serif;color:#222;letter-spacing:0.13px;">ALT-250424</div>
<div class="t" style="left:861.7px;top:615.2px;font:400 15.5px/15.5px 'Liberation Sans', sans-serif;color:#222;letter-spacing:0.00px;transform:scaleX(0.9101);transform-origin:0 0;">PRETOLANI</div>
<div class="t" style="left:1046.5px;top:615.5px;font:400 16.0px/16.0px 'Liberation Sans', sans-serif;color:#333;letter-spacing:0.00px;transform:scaleX(0.9692);transform-origin:0 0;">235 €</div>
<div class="t" style="left:1045.7px;top:659.3px;font:400 16.0px/16.0px 'Liberation Sans', sans-serif;color:#333;letter-spacing:0.00px;transform:scaleX(0.9617);transform-origin:0 0;">327 €</div>
<div class="t" style="left:1046.0px;top:702.5px;font:400 16.0px/16.0px 'Liberation Sans', sans-serif;color:#333;letter-spacing:0.00px;transform:scaleX(0.9243);transform-origin:0 0;">172 €</div>
<div class="t" style="left:1046.5px;top:743.5px;font:400 16.0px/16.0px 'Liberation Sans', sans-serif;color:#333;letter-spacing:0.00px;transform:scaleX(0.9243);transform-origin:0 0;">314 €</div>
<div class="t" style="left:1046.5px;top:787.5px;font:400 16.0px/16.0px 'Liberation Sans', sans-serif;color:#333;letter-spacing:0.00px;transform:scaleX(0.9692);transform-origin:0 0;">257 €</div>
<div class="t" style="left:1190.4px;top:616.4px;font:400 16.0px/16.0px 'Liberation Sans', sans-serif;color:#333;letter-spacing:0.00px;transform:scaleX(0.9603);transform-origin:0 0;">27 €</div>
<div class="t" style="left:1192.4px;top:658.5px;font:400 16.0px/16.0px 'Liberation Sans', sans-serif;color:#333;letter-spacing:0.00px;transform:scaleX(0.9330);transform-origin:0 0;">0€</div>
<div class="t" style="left:1190.0px;top:701.3px;font:400 16.0px/16.0px 'Liberation Sans', sans-serif;color:#333;letter-spacing:0.00px;transform:scaleX(0.8511);transform-origin:0 0;">131€</div>
<div class="t" style="left:1191.5px;top:743.5px;font:400 16.0px/16.0px 'Liberation Sans', sans-serif;color:#333;letter-spacing:0.00px;transform:scaleX(0.9274);transform-origin:0 0;">0€</div>
<div class="t" style="left:1190.0px;top:787.5px;font:400 16.0px/16.0px 'Liberation Sans', sans-serif;color:#333;letter-spacing:0.00px;transform:scaleX(0.8943);transform-origin:0 0;">121 €</div>
<div class="t" style="left:1352.3px;top:616.4px;font:400 16.0px/16.0px 'Liberation Sans', sans-serif;color:#333;letter-spacing:0.00px;transform:scaleX(0.9667);transform-origin:0 0;">0 €</div>
<div class="t" style="left:1352.3px;top:658.5px;font:400 16.0px/16.0px 'Liberation Sans', sans-serif;color:#333;letter-spacing:0.00px;transform:scaleX(0.9667);transform-origin:0 0;">0 €</div>
<div class="t" style="left:1352.3px;top:699.4px;font:400 16.0px/16.0px 'Liberation Sans', sans-serif;color:#333;letter-spacing:0.00px;transform:scaleX(0.9667);transform-origin:0 0;">0 €</div>
<div class="t" style="left:1351.8px;top:741.4px;font:400 16.0px/16.0px 'Liberation Sans', sans-serif;color:#333;letter-spacing:0.00px;transform:scaleX(0.8778);transform-origin:0 0;">211 €</div>
<div class="t" style="left:1352.3px;top:786.2px;font:400 16.0px/16.0px 'Liberation Sans', sans-serif;color:#333;letter-spacing:0.00px;transform:scaleX(0.9667);transform-origin:0 0;">0 €</div>
<div class="t" style="left:1501.6px;top:614.5px;font:400 16.0px/16.0px 'Liberation Sans', sans-serif;color:#333;letter-spacing:0.00px;transform:scaleX(0.9717);transform-origin:0 0;">262 €</div>
<div class="t" style="left:1500.7px;top:658.8px;font:400 16.0px/16.0px 'Liberation Sans', sans-serif;color:#333;letter-spacing:0.00px;transform:scaleX(0.9542);transform-origin:0 0;">327 €</div>
<div class="t" style="left:1499.9px;top:703.3px;font:400 16.0px/16.0px 'Liberation Sans', sans-serif;color:#333;letter-spacing:0.00px;transform:scaleX(0.9617);transform-origin:0 0;">303 €</div>
<div class="t" style="left:1499.9px;top:742.2px;font:400 16.0px/16.0px 'Liberation Sans', sans-serif;color:#333;letter-spacing:0.00px;transform:scaleX(0.9617);transform-origin:0 0;">525 €</div>
<div class="t" style="left:1499.9px;top:785.4px;font:400 16.0px/16.0px 'Liberation Sans', sans-serif;color:#333;letter-spacing:0.00px;transform:scaleX(0.9617);transform-origin:0 0;">378 €</div>
<div class="t" style="left:389.4px;top:837.1px;font:400 15.0px/15.0px 'Liberation Sans', sans-serif;color:#222;letter-spacing:0.05px;">Mostrati da 1 a 5 &nbsp;risultati</div>
<div class="t" style="left:1737.0px;top:836.5px;font:400 15.5px/15.5px 'Liberation Sans', sans-serif;color:#1b1b6e;letter-spacing:0.00px;-webkit-text-stroke:0.4px #1b1b6e;">1</div>
<div class="t" style="left:406.7px;top:891.9px;font:400 19.0px/19.0px 'Liberation Sans', sans-serif;color:#222;letter-spacing:0.05px;">Riepilogo</div>
<div class="t" style="left:392.5px;top:944.4px;font:700 15.5px/15.5px 'Liberation Sans', sans-serif;color:#686872;letter-spacing:0.00px;transform:scaleX(0.9585);transform-origin:0 0;">Costi Commesse:</div>
<div class="t" style="left:557.5px;top:939.3px;font:400 24.5px/24.5px 'Liberation Sans', sans-serif;color:#000;letter-spacing:0.00px;transform:scaleX(0.9233);transform-origin:0 0;-webkit-text-stroke:0.45px #000;">1695 €</div>
<div class="t" style="left:695.3px;top:944.4px;font:700 15.5px/15.5px 'Liberation Sans', sans-serif;color:#686872;letter-spacing:-0.00px;">Totale F1:</div>
<div class="t" style="left:798.6px;top:939.3px;font:400 24.5px/24.5px 'Liberation Sans', sans-serif;color:#000;letter-spacing:0.00px;transform:scaleX(0.9287);transform-origin:0 0;-webkit-text-stroke:0.45px #000;">1305 €</div>
<div class="t" style="left:904.6px;top:944.4px;font:700 15.5px/15.5px 'Liberation Sans', sans-serif;color:#686872;letter-spacing:-0.10px;">Totale F2:</div>
<div class="t" style="left:1013.7px;top:939.3px;font:400 24.5px/24.5px 'Liberation Sans', sans-serif;color:#000;letter-spacing:0.00px;transform:scaleX(0.8989);transform-origin:0 0;-webkit-text-stroke:0.45px #000;">179 €</div>
<div class="t" style="left:1118.0px;top:944.4px;font:700 15.5px/15.5px 'Liberation Sans', sans-serif;color:#686872;letter-spacing:-0.13px;">Totale F3:</div>
<div class="t" style="left:1221.0px;top:939.3px;font:400 24.5px/24.5px 'Liberation Sans', sans-serif;color:#000;letter-spacing:0.00px;transform:scaleX(0.8775);transform-origin:0 0;-webkit-text-stroke:0.45px #000;">211 €</div>
<div class="t" style="left:392.5px;top:986.5px;font:700 16.5px/16.5px 'Liberation Sans', sans-serif;color:#686872;letter-spacing:0.00px;transform:scaleX(0.9034);transform-origin:0 0;">Costi Scarti:</div>
<div class="t" style="left:523.3px;top:980.9px;font:400 23.5px/23.5px 'Liberation Sans', sans-serif;color:#000;letter-spacing:0.00px;transform:scaleX(0.9354);transform-origin:0 0;-webkit-text-stroke:0.45px #000;">126 €</div>
<div class="t" style="left:392.5px;top:1028.9px;font:700 17.0px/17.0px 'Liberation Sans', sans-serif;color:#686872;letter-spacing:0.00px;transform:scaleX(0.8904);transform-origin:0 0;">Costi Totali Commesse:</div>
<div class="t" style="left:592.5px;top:1025.1px;font:400 24.5px/24.5px 'Liberation Sans', sans-serif;color:#000;letter-spacing:0.00px;transform:scaleX(0.8566);transform-origin:0 0;-webkit-text-stroke:0.45px #000;">1821 €</div>
<div class="t" style="left:635.7px;top:1096.9px;font:400 19.0px/19.0px 'Liberation Sans', sans-serif;color:#8c8c8c;letter-spacing:0.00px;transform:scaleX(0.9219);transform-origin:0 0;-webkit-text-stroke:0.4px #8c8c8c;">Costi Per Fascia</div>
<div class="t" style="left:981.2px;top:1096.9px;font:400 19.0px/19.0px 'Liberation Sans', sans-serif;color:#8c8c8c;letter-spacing:0.00px;transform:scaleX(0.9459);transform-origin:0 0;-webkit-text-stroke:0.4px #8c8c8c;">Costi Per Commessa</div>
<div class="t" style="left:1347.2px;top:1096.9px;font:400 19.0px/19.0px 'Liberation Sans', sans-serif;color:#8c8c8c;letter-spacing:-0.02px;-webkit-text-stroke:0.4px #8c8c8c;">Rapporto Scarti</div>
<div class="t" style="left:660.3px;top:1360.8px;font:400 12.0px/12.0px 'Liberation Sans', sans-serif;color:#333;letter-spacing:0.00px;transform:scaleX(0.7712);transform-origin:0 0;">F1</div>
<div class="t" style="left:725.5px;top:1360.8px;font:400 12.0px/12.0px 'Liberation Sans', sans-serif;color:#333;letter-spacing:0.00px;transform:scaleX(0.8141);transform-origin:0 0;">F2</div>
<div class="t" style="left:786.9px;top:1360.8px;font:400 12.0px/12.0px 'Liberation Sans', sans-serif;color:#333;letter-spacing:0.00px;transform:scaleX(0.7926);transform-origin:0 0;">F3</div>
<div class="t" style="left:915.3px;top:1348.6px;font:400 12.5px/12.5px 'Liberation Sans', sans-serif;color:#333;letter-spacing:0.00px;transform:scaleX(0.9175);transform-origin:0 0;">C - 20250424</div>
<div class="t" style="left:1050.2px;top:1348.6px;font:400 12.5px/12.5px 'Liberation Sans', sans-serif;color:#333;letter-spacing:0.00px;transform:scaleX(0.9215);transform-origin:0 0;">C - 20250429</div>
<div class="t" style="left:1173.8px;top:1348.6px;font:400 12.5px/12.5px 'Liberation Sans', sans-serif;color:#333;letter-spacing:0.00px;transform:scaleX(0.9267);transform-origin:0 0;">C - 20250502</div>
<div class="t" style="left:976.3px;top:1370.0px;font:400 12.5px/12.5px 'Liberation Sans', sans-serif;color:#333;letter-spacing:0.00px;transform:scaleX(0.9228);transform-origin:0 0;">C - 20250428</div>
<div class="t" style="left:1110.5px;top:1370.0px;font:400 12.5px/12.5px 'Liberation Sans', sans-serif;color:#333;letter-spacing:0.00px;transform:scaleX(0.9175);transform-origin:0 0;">C - 20250430</div>
<div class="t" style="left:1374.7px;top:1357.6px;font:400 12.5px/12.5px 'Liberation Sans', sans-serif;color:#333;letter-spacing:0.00px;transform:scaleX(0.9704);transform-origin:0 0;">Prodotti</div>
<div class="t" style="left:1480.8px;top:1357.6px;font:400 12.5px/12.5px 'Liberation Sans', sans-serif;color:#333;letter-spacing:0.00px;transform:scaleX(0.8889);transform-origin:0 0;">Scarti</div>
<svg class="b" style="left:0;top:0" width="1918" height="1399"><path d="M707.0,1234.5 L726.7,1131.4 A105,105 0 1 1 602.4,1243.9 Z" fill="#6b7fff" stroke="#bbb" stroke-width="0.7"/><path d="M707.0,1234.5 L602.4,1243.9 A105,105 0 0 1 671.9,1135.5 Z" fill="#38448a" stroke="#bbb" stroke-width="0.7"/><path d="M707.0,1234.5 L671.9,1135.5 A105,105 0 0 1 726.7,1131.4 Z" fill="#0e0e2c" stroke="#bbb" stroke-width="0.7"/><path d="M1062.0,1234.5 L1085.0,1132.0 A105,105 0 0 1 1152.3,1288.1 Z" fill="#4cff00" stroke="#bbb" stroke-width="0.7"/><path d="M1062.0,1234.5 L1152.3,1288.1 A105,105 0 0 1 1048.4,1338.6 Z" fill="#ffd800" stroke="#bbb" stroke-width="0.7"/><path d="M1062.0,1234.5 L1048.4,1338.6 A105,105 0 0 1 961.5,1264.9 Z" fill="#0096ff" stroke="#bbb" stroke-width="0.7"/><path d="M1062.0,1234.5 L961.5,1264.9 A105,105 0 0 1 992.2,1156.1 Z" fill="#b000ff" stroke="#bbb" stroke-width="0.7"/><path d="M1062.0,1234.5 L992.2,1156.1 A105,105 0 0 1 1085.0,1132.0 Z" fill="#ff6a00" stroke="#bbb" stroke-width="0.7"/><path d="M1423.0,1231.0 L1442.2,1127.8 A105,105 0 0 1 1489.7,1149.9 Z" fill="#861c22" stroke="#bbb" stroke-width="0.7"/><path d="M1423.0,1231.0 L1489.7,1149.9 A105,105 0 1 1 1442.2,1127.8 Z" fill="#38448a" stroke="#bbb" stroke-width="0.7"/><rect x="621" y="1362" width="32" height="9" fill="#0022ff" stroke="#ddd" stroke-width="1"/><rect x="683.7" y="1362" width="32" height="9" fill="#38448a" stroke="#ddd" stroke-width="1"/><rect x="747.7" y="1362" width="31" height="9" fill="#101728" stroke="#ddd" stroke-width="1"/><rect x="870" y="1350.6" width="32" height="9" fill="#0096ff" stroke="#ddd" stroke-width="1"/><rect x="1004" y="1350.6" width="32" height="9" fill="#ff6a00" stroke="#ddd" stroke-width="1"/><rect x="1130" y="1350.6" width="32" height="9" fill="#ffd800" stroke="#ddd" stroke-width="1"/><rect x="930.4" y="1373" width="31.5" height="9" fill="#b000ff" stroke="#ddd" stroke-width="1"/><rect x="1064" y="1373" width="32" height="9" fill="#4cff00" stroke="#ddd" stroke-width="1"/><rect x="1328" y="1360" width="32" height="9" fill="#38448a" stroke="#ddd" stroke-width="1"/><rect x="1434" y="1360" width="32" height="9" fill="#861c22" stroke="#ddd" stroke-width="1"/></svg>
</body></html>
